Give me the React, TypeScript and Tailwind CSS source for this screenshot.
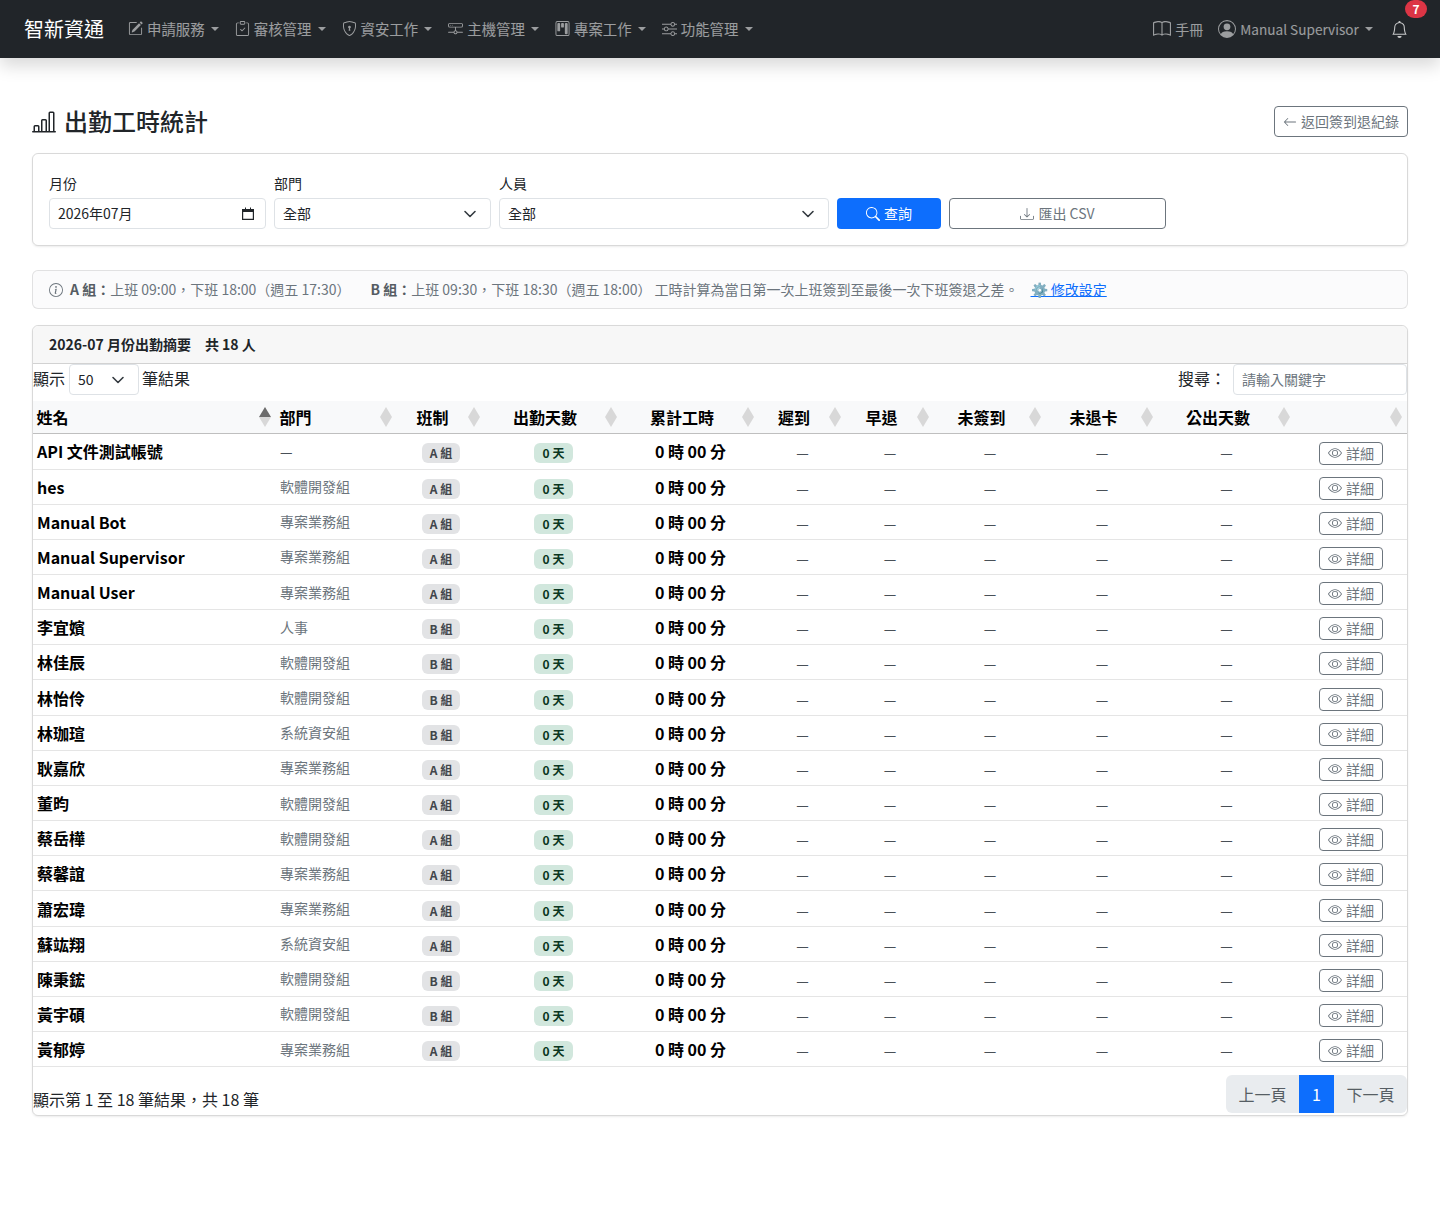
import {
  BsArrowLeft,
  BsBarChartLine,
  BsBell,
  BsBook,
  BsClipboardCheck,
  BsDownload,
  BsEye,
  BsHddNetwork,
  BsInfoCircle,
  BsKanban,
  BsPencilSquare,
  BsPersonCircle,
  BsSearch,
  BsShieldLock,
  BsSliders,
} from "react-icons/bs";

const FONT = `font-['Noto_Sans_CJK_TC','Noto_Sans',sans-serif]`;

const navItems = [
  { label: "申請服務", Icon: BsPencilSquare },
  { label: "審核管理", Icon: BsClipboardCheck },
  { label: "資安工作", Icon: BsShieldLock },
  { label: "主機管理", Icon: BsHddNetwork },
  { label: "專案工作", Icon: BsKanban },
  { label: "功能管理", Icon: BsSliders },
];

const rows = [
  ["API 文件測試帳號", "—", "A"],
  ["hes", "軟體開發組", "A"],
  ["Manual Bot", "專案業務組", "A"],
  ["Manual Supervisor", "專案業務組", "A"],
  ["Manual User", "專案業務組", "A"],
  ["李宜嬪", "人事", "B"],
  ["林佳辰", "軟體開發組", "B"],
  ["林怡伶", "軟體開發組", "B"],
  ["林珈瑄", "系統資安組", "B"],
  ["耿嘉欣", "專案業務組", "A"],
  ["董昀", "軟體開發組", "A"],
  ["蔡岳樺", "軟體開發組", "A"],
  ["蔡馨誼", "專案業務組", "A"],
  ["蕭宏瑋", "專案業務組", "A"],
  ["蘇竑翔", "系統資安組", "A"],
  ["陳秉鋐", "軟體開發組", "B"],
  ["黃宇碩", "軟體開發組", "B"],
  ["黃郁婷", "專案業務組", "A"],
];

const columns = [
  { label: "姓名", width: "w-[243px]", align: "text-left", active: true },
  { label: "部門", width: "w-[121px]", align: "text-left" },
  { label: "班制", width: "w-[88px]", align: "text-center" },
  { label: "出勤天數", width: "w-[137px]", align: "text-center" },
  { label: "累計工時", width: "w-[137px]", align: "text-center" },
  { label: "遲到", width: "w-[87px]", align: "text-center" },
  { label: "早退", width: "w-[88px]", align: "text-center" },
  { label: "未簽到", width: "w-[112px]", align: "text-center" },
  { label: "未退卡", width: "w-[112px]", align: "text-center" },
  { label: "公出天數", width: "w-[137px]", align: "text-center" },
  { label: "", width: "w-[112px]", align: "text-center" },
];

const Caret = () => (
  <span className="ml-[6.2px] inline-block border-x-[4px] border-t-[4.5px] border-x-transparent border-t-current" />
);

const Chevron = () => (
  <svg width="16" height="16" viewBox="0 0 16 16" fill="none">
    <path
      d="M3 5.5l5 5 5-5"
      stroke="#343a40"
      strokeWidth="1.6"
      strokeLinecap="round"
      strokeLinejoin="round"
    />
  </svg>
);

const SortArrows = ({ active }: { active?: boolean }) => (
  <svg
    width="12"
    height="20"
    viewBox="0 0 12 20"
    className="absolute right-[5.5px] top-[6px]"
  >
    <path d="M6 0 L12 10 H0 Z" fill={active ? "#6b6b6b" : "#d8d8d8"} />
    <path d="M6 20 L12 10 H0 Z" fill="#d8d8d8" />
  </svg>
);

const Dash = () => <span className="text-[14px] text-[#495057]">—</span>;

const Field = ({
  label,
  width,
  children,
}: {
  label: string;
  width: string;
  children: React.ReactNode;
}) => (
  <div className={`${width} shrink-0`}>
    <div className="mb-[4px] text-[14px] leading-[21px] text-[#212529]">
      {label}
    </div>
    {children}
  </div>
);

const SelectBox = ({ value }: { value: string }) => (
  <div className="flex h-[31px] items-center justify-between rounded-[4px] border border-[#dee2e6] pl-[8px] pr-[12px] text-[14px] text-[#212529]">
    {value}
    <Chevron />
  </div>
);

export default function App() {
  return (
    <div className={`${FONT} min-h-[1224px] bg-white text-[#212529]`}>
      <nav className="flex h-[58px] items-center bg-[#212529] pl-[24px] pr-[32px] shadow-[0_8px_16px_rgba(0,0,0,0.15)]">
        <span className="mr-[16px] text-[20px] text-white">智新資通</span>
        <div className="flex items-center text-[14.4px] text-white/55">
          {navItems.map(({ label, Icon }) => (
            <div key={label} className="flex items-center px-[8px]">
              <Icon size={15} className="mr-[4px]" />
              {label}
              <Caret />
            </div>
          ))}
        </div>
        <div className="ml-auto flex items-center text-white/55">
          <BsBook size={18} className="mr-[4px]" />
          <span className="text-[14px]">手冊</span>
          <BsPersonCircle size={18} className="ml-[15px] mr-[4px]" />
          <span className="text-[13.6px]">Manual Supervisor</span>
          <Caret />
          <div className="relative ml-[18px] text-white/75">
            <BsBell size={17} />
            <span className="absolute left-[14px] top-[-21px] flex h-[18px] w-[22px] items-center justify-center rounded-full bg-[#dc3545] text-[12px] font-bold text-white">
              7
            </span>
          </div>
        </div>
      </nav>

      <main className="px-[32px] pt-[48px]">
        <div className="flex h-[31px] items-center justify-between">
          <h1 className="flex items-center text-[24px] font-medium">
            <BsBarChartLine size={24} className="mr-[8px]" />
            <span className="pb-[2px]">出勤工時統計</span>
          </h1>
          <button className="flex h-[31px] w-[134px] items-center justify-center rounded-[4px] border border-[#6c757d] text-[14px] text-[#6c757d]">
            <BsArrowLeft size={14} className="mr-[4px]" />
            返回簽到退紀錄
          </button>
        </div>

        <section className="mt-[16px] flex h-[93px] items-end gap-[8px] rounded-[6px] border border-black/15 px-[16px] pb-[16px] shadow-[0_1px_2px_rgba(0,0,0,0.075)]">
          <Field label="月份" width="w-[217px]">
            <div className="flex h-[31px] items-center justify-between rounded-[4px] border border-[#dee2e6] pl-[8px] pr-[11px] text-[14px]">
              2026年07月
              <svg width="12" height="13" viewBox="0 0 12 13">
                <path
                  d="M0 2 H3 V0.5 H4 V2 H8 V0.5 H9 V2 H12 V13 H0 Z M1.2 5 V11.8 H10.8 V5 Z"
                  fill="#212529"
                  fillRule="evenodd"
                />
              </svg>
            </div>
          </Field>
          <Field label="部門" width="w-[217px]">
            <SelectBox value="全部" />
          </Field>
          <Field label="人員" width="w-[330px]">
            <SelectBox value="全部" />
          </Field>
          <button className="flex h-[31px] w-[104px] shrink-0 items-center justify-center rounded-[4px] bg-[#0d6efd] text-[14px] text-white">
            <BsSearch size={14} className="mr-[4px]" />
            查詢
          </button>
          <button className="flex h-[31px] w-[217px] shrink-0 items-center justify-center rounded-[4px] border border-[#6c757d] text-[14px] text-[#6c757d]">
            <BsDownload size={14} className="mr-[4px]" />
            匯出 CSV
          </button>
        </section>

        <section className="mt-[24px] flex h-[39px] items-center whitespace-nowrap rounded-[6px] border border-black/10 bg-[#fbfbfc] px-[16px] text-[14px] text-[#6c757d]">
          <BsInfoCircle size={14} className="mr-[7px]" />
          <b className="font-bold text-[#555c63]">A 組：</b>
          <span>上班 09:00，下班 18:00（週五 17:30）</span>
          <b className="ml-[20px] font-bold text-[#555c63]">B 組：</b>
          <span>上班 09:30，下班 18:30（週五 18:00）</span>
          <span className="ml-[3px]">工時計算為當日第一次上班簽到至最後一次下班簽退之差。</span>
          <a className="ml-[12px] text-[#0d6efd] underline">⚙️ 修改設定</a>
        </section>

        <section className="mt-[16px] h-[791px] rounded-[6px] border border-black/15 shadow-[0_1px_2px_rgba(0,0,0,0.075)]">
          <div className="flex h-[38px] items-center rounded-t-[6px] border-b border-black/15 bg-[#f7f7f7] px-[16px] text-[14px] font-bold">
            <span>2026-07 月份出勤摘要</span>
            <span className="ml-[14px]">共 18 人</span>
          </div>

          <div className="flex h-[31px] items-center justify-between text-[16px]">
            <div className="flex items-center">
              <span className="pb-[3px]">顯示</span>
              <div className="mx-[3px] ml-[4px] flex h-[31px] w-[70px] items-center justify-between rounded-[4px] border border-[#dee2e6] pl-[8px] pr-[12px] text-[14px]">
                50
                <Chevron />
              </div>
              <span className="pb-[3px]">筆結果</span>
            </div>
            <div className="flex items-center">
              <span className="pb-[3px]">搜尋：</span>
              <div className="ml-[7px] flex h-[31px] w-[174px] items-center rounded-[4px] border border-[#dee2e6] pl-[8px] text-[14px] text-[#6c757d]">
                請輸入關鍵字
              </div>
            </div>
          </div>

          <table className="mt-[6px] w-[1374px] table-fixed border-collapse">
            <thead>
              <tr className="h-[32.9px] border-b border-black/25 bg-[#f8f9fa]">
                {columns.map((c) => (
                  <th
                    key={c.label || "actions"}
                    className={`${c.width} ${c.align} relative py-0 pl-[3.6px] pr-[20.6px] text-[16px] font-bold text-black`}
                  >
                    {c.label}
                    <SortArrows active={c.active} />
                  </th>
                ))}
              </tr>
            </thead>
            <tbody>
              {rows.map(([name, dept, group]) => (
                <tr key={name} className="h-[35.167px] border-b border-black/10">
                  <td className="px-[4px] py-0 text-[16px] font-bold text-black">
                    {name}
                  </td>
                  <td
                    className={`px-[4px] py-0 text-[14px] ${
                      dept === "—" ? "text-[#495057]" : "text-[#6c757d]"
                    }`}
                  >
                    {dept}
                  </td>
                  <td className="px-[4px] py-0 text-center">
                    <span className="inline-block rounded-[6px] bg-[#e2e3e5] px-[8px] text-[12px] font-bold leading-[20px] text-[#41464b]">
                      {group} 組
                    </span>
                  </td>
                  <td className="px-[4px] py-0 text-center">
                    <span className="inline-block rounded-[6px] bg-[#d1e7dd] px-[8.5px] text-[12px] font-bold leading-[20px] text-[#0a3622]">
                      0 天
                    </span>
                  </td>
                  <td className="px-[4px] py-0 text-center text-[16px] font-bold text-black">
                    0 時 00 分
                  </td>
                  <td className="px-[4px] py-0 text-center"><Dash /></td>
                  <td className="px-[4px] py-0 text-center"><Dash /></td>
                  <td className="px-[4px] py-0 text-center"><Dash /></td>
                  <td className="px-[4px] py-0 text-center"><Dash /></td>
                  <td className="px-[4px] py-0 text-center"><Dash /></td>
                  <td className="px-[4px] py-0 text-center">
                    <button className="inline-flex h-[23px] w-[64px] items-center justify-center rounded-[4px] border border-[#6c757d] align-middle text-[14px] text-[#6c757d]">
                      <BsEye size={14} className="mr-[4px]" />
                      詳細
                    </button>
                  </td>
                </tr>
              ))}
            </tbody>
          </table>

          <div className="flex items-start justify-between pt-[7.5px]">
            <div className="pt-[12.5px] text-[16px]">
              顯示第 1 至 18 筆結果，共 18 筆
            </div>
            <div className="flex h-[38px] overflow-hidden rounded-[6px] bg-[#e9ecef] text-[16px] text-[#565e64]">
              <span className="flex w-[73px] items-center justify-center">上一頁</span>
              <span className="flex w-[35px] items-center justify-center bg-[#0d6efd] text-white">1</span>
              <span className="flex w-[73px] items-center justify-center">下一頁</span>
            </div>
          </div>
        </section>
      </main>
    </div>
  );
}
